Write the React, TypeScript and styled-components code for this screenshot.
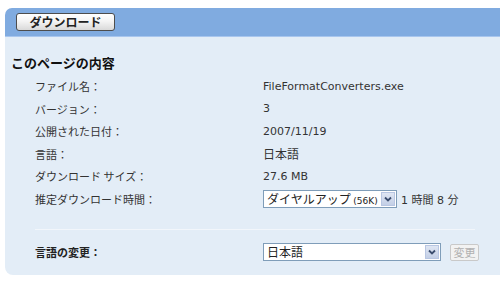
import React from 'react';
import styled, { createGlobalStyle } from 'styled-components';

const GlobalStyle = createGlobalStyle`
  body {
    margin: 0;
    background: #ffffff;
    font-family: "DejaVu Sans", "Noto Sans CJK JP", sans-serif;
    font-size: 11px;
    color: #333333;
    overflow: hidden;
  }
`;

const Panel = styled.div`
  margin: 8px 0 0 5px;
  width: 520px;
`;

const Header = styled.div`
  height: 28px;
  background: #80abe0;
  border-top-left-radius: 7px;
  border-bottom: 1px solid #a8c6ee;
  display: flex;
  align-items: center;
  padding-left: 11px;
`;

const DownloadButton = styled.button`
  width: 99px;
  height: 18px;
  padding: 0;
  border: 1px solid #4d4d4d;
  border-radius: 3px;
  background: linear-gradient(#ffffff 0%, #f4f4f4 45%, #d9d9d9 100%);
  font-family: "Noto Sans CJK JP", sans-serif;
  font-size: 12px;
  font-weight: bold;
  color: #222222;
  line-height: 16px;
`;

const Body = styled.div`
  background: #e3edf7;
  border-bottom-left-radius: 8px;
  padding: 17px 0 8px 6px;
`;

const Heading = styled.h2`
  margin: 0 0 3px;
  font-family: "Noto Sans CJK JP", sans-serif;
  font-size: 13px;
  font-weight: bold;
  color: #111111;
  line-height: 18px;
`;

const InfoGrid = styled.div`
  display: grid;
  grid-template-columns: 228px 1fr;
  grid-auto-rows: 22.5px;
  padding-left: 24px;
  align-items: center;
`;

const Label = styled.div<{ $bold?: boolean }>`
  font-family: "Noto Sans CJK JP", sans-serif;
  font-size: 11px;
  font-weight: ${(p) => (p.$bold ? 'bold' : 'normal')};
  color: ${(p) => (p.$bold ? '#222222' : '#333333')};
  white-space: nowrap;
`;

const Value = styled.div<{ $jp?: boolean }>`
  font-size: ${(p) => (p.$jp ? '12px' : '11px')};
  color: #333333;
  white-space: nowrap;
  display: flex;
  align-items: center;
  gap: 4px;
`;

const Divider = styled.div`
  margin: 19px 0 0 24px;
  width: 440px;
  height: 1px;
  background: #f2f6fb;
`;

const LangRow = styled(InfoGrid)`
  grid-auto-rows: 30px;
  margin-top: 7px;
`;

const SelectBox = styled.div<{ $width: number }>`
  width: ${(p) => p.$width}px;
  height: 18px;
  box-sizing: border-box;
  border: 1px solid #7f9db9;
  background: #ffffff;
  display: flex;
  align-items: stretch;
`;

const SelectText = styled.div`
  flex: 1;
  padding-left: 3px;
  font-family: "Noto Sans CJK JP", sans-serif;
  font-size: 12px;
  line-height: 16px;
  color: #222222;
  white-space: nowrap;
  overflow: hidden;
`;

const Small = styled.span`
  font-family: "DejaVu Sans", sans-serif;
  font-size: 9px;
`;

const ArrowButton = styled.div`
  width: 14px;
  margin: 1px;
  background: linear-gradient(#dfe6f3, #c3cfe6);
  border: 1px solid #b8c6e2;
  box-sizing: border-box;
  display: flex;
  align-items: center;
  justify-content: center;
`;

const ChangeButton = styled.button`
  margin-left: 5px;
  width: 29px;
  height: 17px;
  padding: 0;
  border: 1px solid #c9c9c9;
  border-radius: 2px;
  background: #f2f2f2;
  font-family: "Noto Sans CJK JP", sans-serif;
  font-size: 11px;
  color: #b0b0b0;
  line-height: 15px;
`;

const Chevron = () => (
  <svg width="8" height="6" viewBox="0 0 8 6">
    <path d="M1 1.5 L4 4.5 L7 1.5" fill="none" stroke="#3b4d6e" strokeWidth="1.8" />
  </svg>
);

const Select = ({ width, children }: { width: number; children: React.ReactNode }) => (
  <SelectBox $width={width}>
    <SelectText>{children}</SelectText>
    <ArrowButton>
      <Chevron />
    </ArrowButton>
  </SelectBox>
);

const rows: [string, string, boolean][] = [
  ['ファイル名：', 'FileFormatConverters.exe', false],
  ['バージョン：', '3', false],
  ['公開された日付：', '2007/11/19', false],
  ['言語：', '日本語', true],
  ['ダウンロード サイズ：', '27.6 MB', false],
];

export default function App() {
  return (
    <>
      <GlobalStyle />
      <Panel>
        <Header>
          <DownloadButton>ダウンロード</DownloadButton>
        </Header>
        <Body>
          <Heading>このページの内容</Heading>
          <InfoGrid>
            {rows.map(([label, value, jp]) => (
              <React.Fragment key={label}>
                <Label>{label}</Label>
                <Value $jp={jp}>{value}</Value>
              </React.Fragment>
            ))}
            <Label>推定ダウンロード時間：</Label>
            <Value>
              <Select width={134}>
                ダイヤルアップ <Small>(56K)</Small>
              </Select>
              <span>
                1 <Label as="span">時間</Label> 8 <Label as="span">分</Label>
              </span>
            </Value>
          </InfoGrid>
          <Divider />
          <LangRow>
            <Label $bold>言語の変更：</Label>
            <Value>
              <Select width={178}>日本語</Select>
              <ChangeButton>変更</ChangeButton>
            </Value>
          </LangRow>
        </Body>
      </Panel>
    </>
  );
}
